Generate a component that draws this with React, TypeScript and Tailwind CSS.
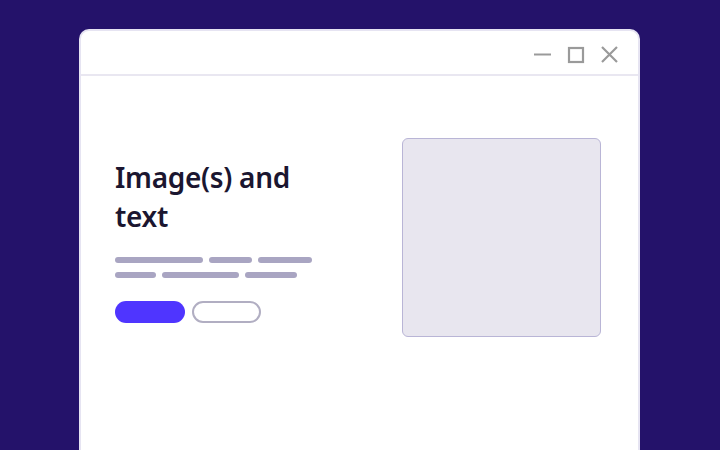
import React from "react";

export default function App() {
  return (
    <div className="w-[720px] h-[450px] bg-[#24126a] overflow-hidden pt-[29px] pl-[79px]" style={{ fontFamily: '"Noto Sans", "Open Sans", sans-serif' }}>
      <div className="w-[561px] h-[440px] bg-white rounded-t-[10px] border-2 border-b-0 border-[#e6e4f2] flex flex-col">
        <div className="h-[45px] border-b-2 border-[#e9e7f1] flex items-center justify-end pr-[19px] pt-[4px] gap-[15px] shrink-0">
          <svg width="19" height="19" viewBox="0 0 19 19">
            <line x1="1" y1="9.5" x2="18" y2="9.5" stroke="#9a9a9a" strokeWidth="2" />
          </svg>
          <svg width="18" height="18" viewBox="0 0 18 18">
            <rect x="2" y="2" width="14" height="14" fill="none" stroke="#9a9a9a" strokeWidth="2.2" />
          </svg>
          <svg width="19" height="19" viewBox="0 0 19 19">
            <path d="M2 2 L17 17 M17 2 L2 17" stroke="#9a9a9a" strokeWidth="2.2" />
          </svg>
        </div>
        <div className="flex pl-[34px] pr-[37px] pt-[62px] justify-between">
          <div className="pt-[20px]">
            <div className="text-[28px] leading-[39px] font-semibold tracking-[-0.3px] text-[#1b1630] w-[220px]">Image(s) and text</div>
            <div className="mt-[21px] flex gap-[6px]">
              <div className="w-[88px] h-[6px] rounded-full bg-[#a9a5c2]" />
              <div className="w-[43px] h-[6px] rounded-full bg-[#a9a5c2]" />
              <div className="w-[54px] h-[6px] rounded-full bg-[#a9a5c2]" />
            </div>
            <div className="mt-[9px] flex gap-[6px]">
              <div className="w-[41px] h-[6px] rounded-full bg-[#a9a5c2]" />
              <div className="w-[77px] h-[6px] rounded-full bg-[#a9a5c2]" />
              <div className="w-[52px] h-[6px] rounded-full bg-[#a9a5c2]" />
            </div>
            <div className="mt-[23px] flex gap-[7px]">
              <div className="w-[70px] h-[22px] rounded-full bg-[#4f35ff]" />
              <div className="w-[69px] h-[22px] rounded-full border-2 border-[#b1aec2] bg-white" />
            </div>
          </div>
          <div className="w-[199px] h-[199px] rounded-[6px] border border-[#b9b5d6] bg-[#e8e6ef]" />
        </div>
      </div>
    </div>
  );
}
